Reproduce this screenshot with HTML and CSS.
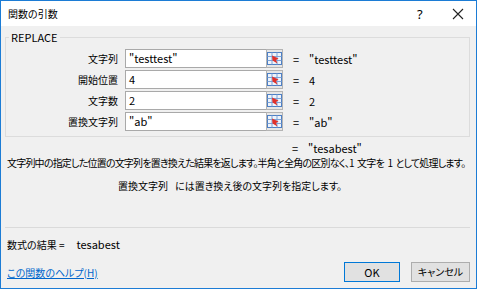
FILE: index.html
```html
<!DOCTYPE html>
<html lang="ja">
<head>
  <meta charset="UTF-8" />
  <title>関数の引数</title>
  <link rel="stylesheet" href="styles.css">
</head>
<body>

  <div class="dialog">
    <div class="titlebar">
      <span class="title">関数の引数</span>
      <span class="help">?</span>
      <span class="close">
        <svg width="12" height="12" viewBox="0 0 12 12"><path d="M1 1L11 11M11 1L1 11" stroke="#222" stroke-width="1.1" fill="none"/></svg>
      </span>
    </div>

    <div class="content">
      <fieldset class="group">
        <legend>REPLACE</legend>
        <div class="args">
          <label>文字列</label>
          <div class="field">"testtest"</div>
          <button class="ref"><svg width="15" height="15" viewBox="0 0 15 15"><rect x="0.5" y="1.5" width="14" height="12" fill="#eef3fa" stroke="#4d7fc4"/><path d="M0.5 5.5H14.5M0.5 9.5H14.5M5 1.5V13.5M10 1.5V13.5" stroke="#7ca3d8" stroke-width="1"/><path d="M5 4.5L11.5 7.5L9 9L10.5 12.5L5.5 9.5Z" fill="#e0302a"/></svg></button>
          <span class="eq">=</span>
          <span class="val">"testtest"</span>

          <label>開始位置</label>
          <div class="field">4</div>
          <button class="ref"><svg width="15" height="15" viewBox="0 0 15 15"><rect x="0.5" y="1.5" width="14" height="12" fill="#eef3fa" stroke="#4d7fc4"/><path d="M0.5 5.5H14.5M0.5 9.5H14.5M5 1.5V13.5M10 1.5V13.5" stroke="#7ca3d8" stroke-width="1"/><path d="M5 4.5L11.5 7.5L9 9L10.5 12.5L5.5 9.5Z" fill="#e0302a"/></svg></button>
          <span class="eq">=</span>
          <span class="val">4</span>

          <label>文字数</label>
          <div class="field">2</div>
          <button class="ref"><svg width="15" height="15" viewBox="0 0 15 15"><rect x="0.5" y="1.5" width="14" height="12" fill="#eef3fa" stroke="#4d7fc4"/><path d="M0.5 5.5H14.5M0.5 9.5H14.5M5 1.5V13.5M10 1.5V13.5" stroke="#7ca3d8" stroke-width="1"/><path d="M5 4.5L11.5 7.5L9 9L10.5 12.5L5.5 9.5Z" fill="#e0302a"/></svg></button>
          <span class="eq">=</span>
          <span class="val">2</span>

          <label>置換文字列</label>
          <div class="field">"ab"</div>
          <button class="ref"><svg width="15" height="15" viewBox="0 0 15 15"><rect x="0.5" y="1.5" width="14" height="12" fill="#eef3fa" stroke="#4d7fc4"/><path d="M0.5 5.5H14.5M0.5 9.5H14.5M5 1.5V13.5M10 1.5V13.5" stroke="#7ca3d8" stroke-width="1"/><path d="M5 4.5L11.5 7.5L9 9L10.5 12.5L5.5 9.5Z" fill="#e0302a"/></svg></button>
          <span class="eq">=</span>
          <span class="val">"ab"</span>
        </div>
      </fieldset>

      <div class="result-line"><span class="eq">=</span><span class="val">"tesabest"</span></div>
      <p class="desc">文字列中の指定した位置の文字列を置き換えた結果を返します。半角と全角の区別なく、1 文字を 1 として処理します。</p>
      <p class="note"><span class="note-name">置換文字列</span>には置き換え後の文字列を指定します。</p>

      <div class="separator"></div>

      <p class="formula">数式の結果 =<span class="formula-val">tesabest</span></p>

      <div class="footer">
        <a class="help-link" href="#">この関数のヘルプ(H)</a>
        <div class="buttons">
          <button class="btn default">OK</button>
          <button class="btn cjk">キャンセル</button>
        </div>
      </div>
    </div>
  </div>

</body>
</html>
```

FILE: styles.css
```css
body {
  margin: 0;
  font-family: "Noto Sans CJK JP", "Noto Sans", sans-serif;
  font-size: 11px;
  font-feature-settings: "palt";
  color: #000;
}

.dialog {
  width: 477px;
  height: 289px;
  box-sizing: border-box;
  border: 1px solid #1c7cd5;
  background: #f0f0f0;
  display: flex;
  flex-direction: column;
}

.titlebar {
  height: 25px;
  background: #fff;
  display: flex;
  align-items: center;
  padding-left: 7px;
  padding-right: 12px;
}

.title {
  flex: 1;
  font-size: 10px;
}

.help {
  width: 10px;
  font-size: 13px;
  font-family: "Noto Sans", sans-serif;
  margin-right: 25px;
}

.close {
  display: flex;
}

.content {
  flex: 1;
  padding: 0 6px 0 4px;
  display: flex;
  flex-direction: column;
}

.group {
  margin: 4px 0 0;
  padding: 5px 0 5px;
  border: 1px solid #dcdcdc;
  min-width: 0;
}

.group legend {
  margin-left: 3px;
  padding: 0 2px;
  line-height: 14px;
}

.args {
  display: grid;
  grid-template-columns: 119px 141px 17px 26px auto;
  row-gap: 2px;
  align-items: center;
}

.args label {
  text-align: right;
  padding-right: 7px;
  font-size: 10px;
}

.field {
  height: 19px;
  box-sizing: border-box;
  border: 1px solid #a9a9a9;
  border-right: none;
  background: #fff;
  padding: 0 3px;
  line-height: 17px;
}

.ref {
  height: 19px;
  width: 17px;
  padding: 0;
  margin: 0;
  border: 1px solid #b4b4b4;
  background: #e6e6e6;
  display: flex;
  align-items: center;
  justify-content: center;
}

.eq {
  text-align: center;
}

.val {
  white-space: nowrap;
}

.result-line {
  margin-top: 5px;
  line-height: 13px;
  padding-left: 280px;
  display: flex;
}

.result-line .eq {
  width: 20px;
}

.result-line .val {
  margin-left: 3px;
}

p {
  margin: 0;
  line-height: 14px;
}

.desc {
  margin-top: 1px;
  line-height: 13px;
  padding-left: 2px;
  white-space: nowrap;
  font-size: 10px;
  letter-spacing: -0.8px;
  word-spacing: 2px;
}

.note {
  margin-top: 10px;
  padding-left: 113px;
  font-size: 10px;
}

.note-name {
  margin-right: 7px;
}

.separator {
  margin-top: 34px;
  height: 1px;
  background: #dadada;
}

.formula {
  margin-top: 9px;
  padding-left: 2px;
  font-size: 10px;
}

.formula-val {
  margin-left: 12px;
  font-size: 11px;
}

.footer {
  margin-top: 10px;
  display: flex;
  align-items: center;
  justify-content: space-between;
  padding-left: 2px;
}

.help-link {
  color: #0066cc;
  text-decoration: underline;
  font-size: 10px;
}

.buttons {
  display: flex;
  gap: 11px;
}

.btn {
  width: 56px;
  height: 20px;
  font-family: inherit;
  font-size: 11px;
  font-feature-settings: "palt";
  background: #e1e1e1;
  border: 1px solid #adadad;
  padding: 0;
  line-height: 18px;
}

.btn.default {
  border: 1px solid #0078d7;
}

.btn.cjk {
  width: 59px;
  font-size: 10px;
}
```
